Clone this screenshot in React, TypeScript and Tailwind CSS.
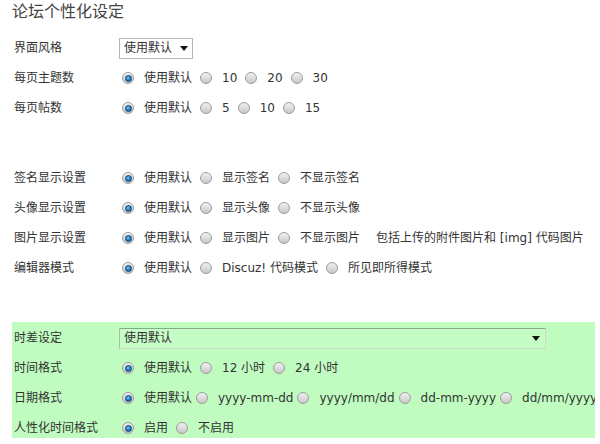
import React from "react";

const FONT = { fontFamily: '"DejaVu Sans", "Noto Sans CJK SC", sans-serif' };

function Radio({ checked }: { checked?: boolean }) {
  return (
    <span className="relative inline-flex h-[12px] w-[12px] shrink-0 items-center justify-center rounded-full border border-[#9c9c9c] bg-gradient-to-b from-[#f2f2f2] to-[#c8c8c8]">
      {checked && (
        <span className="h-[7px] w-[7px] rounded-full border border-[#0c3f66] bg-[radial-gradient(circle_at_40%_35%,#6fc4ff_0%,#1f7cc4_55%,#0d4a7a_100%)]" />
      )}
    </span>
  );
}

function Opt({ checked, text, tight }: { checked?: boolean; text: string; tight?: boolean }) {
  return (
    <span className="flex items-center">
      <Radio checked={checked} />
      <span className={tight ? "ml-[10px] mr-[4px] whitespace-nowrap" : "ml-[10px] mr-[8px] whitespace-nowrap"}>{text}</span>
    </span>
  );
}

function Row({ label, children }: { label: string; children: React.ReactNode }) {
  return (
    <div className="flex h-[30px] items-center pt-[2px]">
      <div className="w-[107px] shrink-0 pl-[2px]">{label}</div>
      <div className="flex items-center">{children}</div>
    </div>
  );
}

function Arrow() {
  return (
    <svg width="8" height="5" viewBox="0 0 8 5" className="shrink-0">
      <path d="M0 0 H8 L4 5 Z" fill="#111" />
    </svg>
  );
}

export default function App() {
  return (
    <div className="h-[444px] w-[600px] overflow-hidden bg-white pl-[12px] text-[12px] text-[#333]" style={FONT}>
      <div className="mb-[8px] h-[24px] text-[16px] leading-[24px] text-[#444]">论坛个性化设定</div>

      <Row label="界面风格">
        <div className="flex h-[21px] w-[74px] items-center justify-between border border-[#b5b5b5] bg-white pl-[4px] pr-[4px]">
          <span>使用默认</span>
          <Arrow />
        </div>
      </Row>
      <Row label="每页主题数">
        <span className="ml-[3px] flex items-center">
          <Opt checked text="使用默认" />
          <Opt text="10" />
          <Opt text="20" />
          <Opt text="30" />
        </span>
      </Row>
      <Row label="每页帖数">
        <span className="ml-[3px] flex items-center">
          <Opt checked text="使用默认" />
          <Opt text="5" />
          <Opt text="10" />
          <Opt text="15" />
        </span>
      </Row>

      <div className="h-[40px]" />

      <Row label="签名显示设置">
        <span className="ml-[3px] flex items-center">
          <Opt checked text="使用默认" />
          <Opt text="显示签名" />
          <Opt text="不显示签名" />
        </span>
      </Row>
      <Row label="头像显示设置">
        <span className="ml-[3px] flex items-center">
          <Opt checked text="使用默认" />
          <Opt text="显示头像" />
          <Opt text="不显示头像" />
        </span>
      </Row>
      <Row label="图片显示设置">
        <span className="ml-[3px] flex items-center">
          <Opt checked text="使用默认" />
          <Opt text="显示图片" />
          <Opt text="不显示图片" />
          <span className="ml-[8px] whitespace-nowrap">包括上传的附件图片和 [img] 代码图片</span>
        </span>
      </Row>
      <Row label="编辑器模式">
        <span className="ml-[3px] flex items-center">
          <Opt checked text="使用默认" />
          <Opt text="Discuz! 代码模式" />
          <Opt text="所见即所得模式" />
        </span>
      </Row>

      <div className="h-[40px]" />

      <div className="h-[116px] w-[583px] overflow-hidden bg-[#c0fcc0]">
        <Row label="时差设定">
          <div className="flex h-[21px] w-[427px] items-center justify-between border border-[#c8dcc8] border-t-[#88aa88] border-l-[#a8c0a8] bg-[#c6fcc6] pl-[4px] pr-[5px]">
            <span>使用默认</span>
            <Arrow />
          </div>
        </Row>
        <Row label="时间格式">
          <span className="ml-[3px] flex items-center">
            <Opt checked text="使用默认" />
            <Opt text="12 小时" />
            <Opt text="24 小时" />
          </span>
        </Row>
        <Row label="日期格式">
          <span className="ml-[3px] flex items-center whitespace-nowrap">
            <Opt checked tight text="使用默认" />
            <Opt tight text="yyyy-mm-dd" />
            <Opt tight text="yyyy/mm/dd" />
            <Opt tight text="dd-mm-yyyy" />
            <Opt tight text="dd/mm/yyyy" />
          </span>
        </Row>
        <Row label="人性化时间格式">
          <span className="ml-[3px] flex items-center">
            <Opt checked text="启用" />
            <Opt text="不启用" />
          </span>
        </Row>
      </div>
    </div>
  );
}
